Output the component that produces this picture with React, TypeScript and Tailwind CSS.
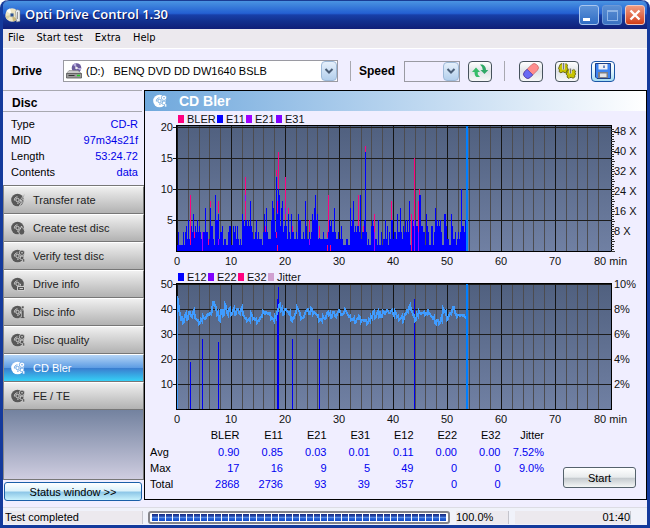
import type { ReactNode } from 'react';

const E11_COLUMNS =
  '1311113134' + '2524436343' + '5343213373' + '3227442195' + '5623341221' +
  '1344114342' + '4212165455' + '4548432235' + '2322213637' + '322258753c' +
  '6a94783454' + '2632643223' + '2655223284' + '2232365795' + '6232223222' +
  '2354533732' + '2322421112' + '2117458343' + '44392335g3' + '1211454322' +
  '1511312252' + '4132552332' + '6337324353' + '5381354554' + '4599443316' +
  '4311441375' + '4545311664' + '2211642231' + '2323a44351';

const PINK = '#ff0080';
const VIOLET = '#a000ff';

// column, from, to, colour
const BLER_MARKS: [number, number, number, string][] = [
  [13, 1, 9, PINK], [17, 2, 3, PINK], [25, 0, 3, VIOLET], [31, 1, 2, PINK], [33, 7, 8, PINK],
  [41, 6, 8, PINK], [41, 1, 2, VIOLET], [68, 5, 12, PINK], [68, 8, 9, VIOLET], [88, 3, 4, PINK],
  [99, 12, 13, PINK], [99, 2, 3, PINK], [100, 6, 8, PINK], [100, 0, 1, PINK], [101, 10, 16, PINK],
  [108, 5, 12, PINK], [108, 6, 7, VIOLET], [111, 6, 7, PINK], [115, 3, 4, PINK], [132, 3, 5, PINK],
  [132, 1, 2, VIOLET], [142, 2, 4, PINK], [150, 0, 1, PINK], [150, 2, 3, PINK], [151, 3, 9, PINK],
  [153, 0, 1, PINK], [181, 4, 9, PINK], [186, 3, 4, PINK], [188, 16, 17, PINK], [197, 3, 6, PINK],
  [197, 0, 3, VIOLET], [214, 5, 8, PINK], [234, 0, 6, PINK], [237, 5, 15, PINK], [237, 0, 5, VIOLET],
  [241, 3, 8, PINK], [241, 0, 3, VIOLET], [242, 9, 10, PINK],
];

const E12_SPIKES: [number, number][] = [
  [13, 19], [25, 28], [41, 27], [100, 44], [101, 49], [115, 28], [142, 28], [237, 44],
];

const JITTER = [
  45, 39, 36, 35, 38, 36, 39, 37, 39, 37, 36, 35, 36, 37, 36, 38, 38, 39, 43, 41, 38, 36, 40, 38,
  42, 38, 40, 38, 40, 38, 40, 38, 40, 38, 37, 36, 36, 38, 36, 36, 35, 36, 37, 39, 38, 39, 39, 37,
  36, 37, 39, 42, 40, 38, 40, 39, 38, 36, 37, 39, 41, 39, 36, 37, 39, 40, 38, 40, 38, 39, 38, 36,
  36, 37, 36, 39, 38, 37, 39, 37, 38, 40, 38, 39, 40, 38, 37, 36, 36, 35, 36, 37, 35, 36, 36, 35,
  36, 37, 39, 37, 39, 38, 37, 39, 38, 40, 39, 40, 38, 39, 37, 36, 37, 36, 38, 39, 41, 40, 38, 36,
  38, 39, 38, 39, 38, 39, 38, 37, 36, 35, 36, 35, 36, 40, 39, 36, 38, 39, 41, 38, 37, 38, 38, 38,
  37, 39,
];

const X0 = 32;
const TOP = 15;
const BOTTOM = 140;

type Tick = { y: number; label: string };

type ChartProps = {
  id: string;
  title: string;
  legend: { label: string; color: string; x: number }[];
  left: Tick[];
  right: Tick[];
  fineTicks?: boolean;
  children: ReactNode;
};

const Chart = ({ id, title, legend, left, right, fineTicks, children }: ChartProps) => (
  <svg viewBox="0 0 501 158" className="block w-full" role="img" aria-label={title}>
    <defs>
      <linearGradient id={id} x1="0" y1="0" x2="0" y2="1">
        <stop offset="0" stopColor="#50607f" />
        <stop offset="1" stopColor="#7080a3" />
      </linearGradient>
    </defs>
    <g className="[font-family:'Liberation_Sans',Arial,sans-serif] text-[11px]" fill="#111">
      {legend.map((item) => (
        <g key={item.label}>
          <rect x={item.x} y="4" width="6" height="8" fill={item.color} />
          <text x={item.x + 9} y="12">{item.label}</text>
        </g>
      ))}
      {left.map((t) => (
        <text key={t.label} x="28" y={t.y + 4} textAnchor="end">{t.label}</text>
      ))}
      {right.map((t) => (
        <text key={t.label} x="469" y={t.y + 4}>{t.label}</text>
      ))}
      {[0, 10, 20, 30, 40, 50, 60, 70].map((m) => (
        <text key={m} x={X0 + m * 5.4} y="154" textAnchor="middle">{m}</text>
      ))}
      <text x="449" y="154">80 min</text>
    </g>
    <g shapeRendering="crispEdges">
      <rect x={X0} y={TOP} width="434" height="125" fill={`url(#${id})`} />
      {Array.from({ length: 40 }, (_, i) => (
        <rect key={i} x={Math.round(X0 + i * 10.8)} y={TOP} width="1" height="125" fill={i % 5 ? '#4c4c50' : '#151515'} />
      ))}
      {left.map((t) => (
        <rect key={t.label} x="28" y={t.y} width="438" height="1" fill="#1c1c1c" />
      ))}
      {children}
      <rect x="321" y={TOP} width="2" height="125" fill="#0080ff" />
      <path d="M31 14h436v127h-436z M32 15v125h434v-125z" fillRule="evenodd" fill="#000" />
      {fineTicks &&
        Array.from({ length: 50 }, (_, i) => (
          <rect key={i} x="466" y={Math.round(BOTTOM - i * 2.5)} width={i % 4 ? 3 : 4} height="1" fill="#333" />
        ))}
    </g>
  </svg>
);

const BlerChart = () => {
  const scale = 6.2;
  return (
    <Chart
      id="blerFill"
      title="BLER, E11, E21 and E31 over time"
      legend={[
        { label: 'BLER', color: PINK, x: 33 },
        { label: 'E11', color: '#0000ff', x: 72 },
        { label: 'E21', color: '#a000ff', x: 101 },
        { label: 'E31', color: '#8000ff', x: 131 },
      ]}
      left={[20, 15, 10, 5].map((v) => ({ y: Math.round(BOTTOM - v * scale), label: String(v) }))}
      right={[48, 40, 32, 24, 16, 8].map((v) => ({ y: BOTTOM - v * 2.5, label: `${v} X` }))}
      fineTicks
    >
      {E11_COLUMNS.split('').map((c, i) => {
        const h = Math.round(parseInt(c, 36) * scale);
        return <rect key={i} x={X0 + i} y={BOTTOM - h} width="1" height={h} fill="#0000ff" />;
      })}
      {BLER_MARKS.map(([x, from, to, color], i) => (
        <rect key={i} x={X0 + x} y={Math.round(BOTTOM - to * scale)} width="1" height={Math.round((to - from) * scale)} fill={color} />
      ))}
    </Chart>
  );
};

const JitterChart = () => {
  const noise = [0, 2, -1, 1, 0, -2, 1, 0, 1, -1, 2, -1];
  const points = JITTER.flatMap((v, i) => {
    const y = Math.round(BOTTOM - v * 2.5);
    return [`${X0 + i * 2},${y + noise[(i * 2) % 12]}`, `${X0 + i * 2 + 1},${y + noise[(i * 5 + 1) % 12]}`];
  });
  return (
    <Chart
      id="jitterFill"
      title="E12, E22, E32 and jitter over time"
      legend={[
        { label: 'E12', color: '#0000ff', x: 33 },
        { label: 'E22', color: '#8000ff', x: 63 },
        { label: 'E32', color: PINK, x: 93 },
        { label: 'Jitter', color: '#d0a0d0', x: 123 },
      ]}
      left={[50, 40, 30, 20, 10].map((v) => ({ y: Math.round(BOTTOM - v * 2.5), label: String(v) }))}
      right={[10, 8, 6, 4, 2].map((v) => ({ y: Math.round(BOTTOM - v * 12.5), label: `${v}%` }))}
    >
      {E12_SPIKES.map(([x, v]) => (
        <rect key={x} x={X0 + x} y={Math.round(BOTTOM - v * 2.5)} width="1" height={Math.round(v * 2.5)} fill="#0000f0" />
      ))}
      <polyline points={points.slice(0, 290).join(' ')} fill="none" stroke="#409cff" strokeWidth="2" />
      <rect x={X0} y="27" width="1" height="113" fill="#409cff" />
    </Chart>
  );
};

type Badge = 'bolt' | 'flame' | 'search' | 'drive' | 'info';

const DiscIcon = ({ badge, color = '#585858', hole = '#d8d8d8' }: { badge: Badge; color?: string; hole?: string }) => (
  <svg viewBox="0 0 14 14" className="h-3.5 w-3.5 shrink-0" aria-hidden="true">
    <circle cx="6.5" cy="7" r="6.3" fill={color} />
    <path d="M3.4 7.5A3.200 3.200 0 0 1 6.500 3.800M9.600 6.800A3.200 3.200 0 0 1 6 10.200" fill="none" stroke={hole} strokeWidth="0.9" />
    <circle cx="6.5" cy="7" r="1.7" fill="none" stroke={hole} strokeWidth="0.9" />
    {badge === 'bolt' && <path d="M13.5 1 9 7.5h2L8.5 13 13.5 6.5h-2L13.8 1z" fill={color} stroke={hole} strokeWidth="0.7" />}
    {badge === 'flame' && <path d="M10.5 5c.3 2 3.3 3 3.3 5.5S12.2 14 10.6 14 7.8 12.5 7.8 10.8 10 8 10.5 5z" fill={color} stroke={hole} strokeWidth="0.8" />}
    {badge === 'search' && (
      <>
        <circle cx="11" cy="3.800" r="2.700" fill={color} stroke={hole} strokeWidth="0.8" />
        <circle cx="11" cy="3.800" r="0.8" fill={hole} />
        <path d="M9.500 7.500h3.200v2.500h1v3h-2V10.500H9.500z" fill={color} stroke={hole} strokeWidth="0.6" />
      </>
    )}
    {badge === 'drive' && <path d="M6.500 9.500h7v4h-7zM8.500 11.500h3.500" fill={color} stroke={hole} strokeWidth="0.9" />}
    {badge === 'info' && <path d="M10.500 1h2.500v2.500h-2.500zM9.500 5h3.500v7h1v1.500H9V12h1.500V6.500h-1z" fill={color} stroke={hole} strokeWidth="0.6" />}
  </svg>
);

const AppIcon = () => (
  <svg viewBox="0 0 16 16" className="h-4 w-4" aria-hidden="true">
    <circle cx="7" cy="8" r="6.700" fill="#efe6c4" />
    <path d="M7 8 1.500 4.200A6.700 6.700 0 0 1 5 1.600z" fill="#fffef6" />
    <path d="M7 8 12 12.500A6.700 6.700 0 0 1 8 14.600z" fill="#c9b77c" />
    <path d="M7 8 2 12.400A6.700 6.700 0 0 1 .4 9z" fill="#d9cfa4" />
    <circle cx="7" cy="8" r="2.200" fill="#7f93a5" />
    <circle cx="7" cy="8" r="1" fill="#123a8c" />
    <path d="M10.500 4.500 12 2.500l3 1v10.800l-3.500.7z" fill="#e9edf0" stroke="#777" strokeWidth="0.5" />
    <path d="M12.500 5v7" stroke="#999" />
  </svg>
);

const DriveIcon = () => (
  <svg viewBox="0 0 16 16" className="h-4 w-4" aria-hidden="true">
    <circle cx="10.500" cy="5" r="4.800" fill="#6a5a9c" />
    <path d="M10.500 5 7 1.700A4.800 4.800 0 0 1 10 .2zM10.500 5l4 2.600a4.800 4.800 0 0 0 .8-2.600z" fill="#b9aee0" />
    <circle cx="10.500" cy="5" r="1.300" fill="#eee" />
    <path d="M3 7.500h9l3.500 3H.5z" fill="#c9c9c9" stroke="#777" strokeWidth="0.5" />
    <path d="M.5 10.500h15v4.500H.5z" fill="#9a9a9a" stroke="#555" strokeWidth="0.8" />
    <path d="M2.500 12.500h6" stroke="#333" />
    <path d="M11 12.500h3" stroke="#20d020" strokeWidth="1.500" />
  </svg>
);

const SwapIcon = () => (
  <svg viewBox="0 0 18 16" className="h-4 w-[18px]" aria-hidden="true">
    <path d="M5 4.500 9 9H6.800v2.500L9 14H5.500Q3.500 13 3.500 9H1z" fill="#36bd68" />
    <path d="M13.500 11 9.500 7h2.300Q12 4 9 1.500h2.500Q15 3 15 7h2.300z" fill="#2fa866" />
  </svg>
);

const EraserIcon = () => (
  <svg viewBox="0 0 18 16" className="h-4 w-[18px]" aria-hidden="true">
    <g transform="rotate(-45 9 8)">
      <rect x="0.500" y="4" width="17" height="8" rx="3.500" fill="#ff8d8d" stroke="#c86464" strokeWidth="0.7" />
      <path d="M7.500 4v8H4A3.500 3.500 0 0 1 .5 8.500V7.500A3.500 3.500 0 0 1 4 4z" fill="#6a6af4" stroke="#3c3cb0" strokeWidth="0.7" />
    </g>
  </svg>
);

const GearsIcon = () => (
  <svg viewBox="0 0 18 16" className="h-4 w-[18px]" aria-hidden="true">
    <g stroke="#55550a" strokeWidth="0.8" fill="#c8c400">
      <path d="M2 1.500 4 .5l1 1h2l1-1L9.500 2 9 4l1 2-1 1.500V9L7 10 6 9H4L3 10 1 8.500 1.500 7 .5 5.500z" />
      <path d="M10 7l2-.8 1 1h2l.8-.8L17.500 8 17 9.500l.7 1.700-1 1 .3 1.600-2 1.500-1.200-.8H12L11 15.500l-2-1.400.4-1.400L8 11l1.100-1.300L9 8z" />
    </g>
    <path d="M5.500 0v6.500" stroke="#eee" strokeWidth="3" />
    <path d="M5.500 0v6.500" stroke="#777" strokeWidth="1.500" />
    <path d="M12.500 5.500v5" stroke="#eee" strokeWidth="2.600" />
    <path d="M12.500 5.500v5" stroke="#777" strokeWidth="1.300" />
  </svg>
);

const SaveIcon = () => (
  <svg viewBox="0 0 16 16" className="h-4 w-4" aria-hidden="true">
    <path d="M.5.5h15v15H2L.5 14z" fill="#3d83f0" stroke="#1d3f86" />
    <path d="M3.500 1h9v5.500h-9z" fill="#eef0f6" />
    <path d="M9 2.500v2.500" stroke="#3d66b0" strokeWidth="1.500" />
    <path d="M3 9h10v6H3z" fill="#7e8086" />
    <path d="M5 10.500h6.500V14H5z" fill="#e4e4e8" />
  </svg>
);

const Chevron = () => (
  <span className="pointer-events-none absolute inset-y-0 right-0 flex w-4 items-center justify-center rounded-sm border border-[#9db9d8] bg-gradient-to-b from-[#e6f0fb] to-[#b3cfec]">
    <svg viewBox="0 0 10 8" className="h-2 w-2.5" aria-hidden="true">
      <path d="M1.500 2 5 5.500 8.500 2" fill="none" stroke="#4a5d76" strokeWidth="2" />
    </svg>
  </span>
);

const ToolButton = ({ label, active, children }: { label: string; active?: boolean; children: ReactNode }) => (
  <button
    type="button"
    aria-label={label}
    className={`flex h-[21px] w-6 items-center justify-center rounded-sm border bg-gradient-to-b from-white ${
      active ? 'border-[#1a55a5] via-[#e2f4fb] to-[#a4dcf2]' : 'border-[#46525c] via-[#dfe3e6] to-[#f6f8f8]'
    }`}
  >
    {children}
  </button>
);

const TEST_PAGES: { label: string; badge: Badge }[] = [
  { label: 'Transfer rate', badge: 'bolt' },
  { label: 'Create test disc', badge: 'flame' },
  { label: 'Verify test disc', badge: 'search' },
  { label: 'Drive info', badge: 'drive' },
  { label: 'Disc info', badge: 'info' },
  { label: 'Disc quality', badge: 'search' },
  { label: 'CD Bler', badge: 'search' },
  { label: 'FE / TE', badge: 'search' },
];

const DISC_FACTS = [
  ['Type', 'CD-R'],
  ['MID', '97m34s21f'],
  ['Length', '53:24.72'],
  ['Contents', 'data'],
];

const COLUMNS = ['BLER', 'E11', 'E21', 'E31', 'E12', 'E22', 'E32', 'Jitter'];
const RESULTS: [string, string[]][] = [
  ['Avg', ['0.90', '0.85', '0.03', '0.01', '0.11', '0.00', '0.00', '7.52%']],
  ['Max', ['17', '16', '9', '5', '49', '0', '0', '9.0%']],
  ['Total', ['2868', '2736', '93', '39', '357', '0', '0', '']],
];

const TitleBar = () => (
  <header className="flex h-[29px] items-center rounded-t-md border-t border-[#1a3c94] bg-[linear-gradient(#4a94e2_0%,#2b6ad4_35%,#2460d2_44%,#183fa8_50%,#12308e_72%,#101f78_100%)] pr-0.5 pl-0.5">
    <AppIcon />
    <h1 className="ml-1 flex-1 [font-family:'Open_Sans','Noto_Sans',sans-serif] text-[13px] font-semibold text-white [text-shadow:1px_1px_0_#0a1a60]">
      Opti Drive Control 1.30
    </h1>
    <div className="flex gap-[3px]">
      <button type="button" aria-label="Minimize" className="flex h-5 w-5 items-end rounded-[3px] border border-[#a9c6ee] bg-gradient-to-b from-[#5e93d8] to-[#2f6cc4] p-[3px]">
        <span className="h-[3px] w-[7px] bg-white" />
      </button>
      <button type="button" aria-label="Maximize" disabled className="flex h-5 w-5 items-center justify-center rounded-[3px] border border-[#6d98d6] bg-gradient-to-b from-[#5b8fd4] to-[#3a72c2]">
        <span className="h-[11px] w-[11px] border border-t-2 border-[#8fb5e6]" />
      </button>
      <button type="button" aria-label="Close" className="flex h-5 w-5 items-center justify-center rounded-[3px] border border-[#f0c8c0] bg-gradient-to-b from-[#ee9a80] to-[#d23c10]">
        <svg viewBox="0 0 12 12" className="h-3 w-3" aria-hidden="true">
          <path d="M1.500 1.500l9 9M10.500 1.500l-9 9" stroke="#fff" strokeWidth="2.400" />
        </svg>
      </button>
    </div>
  </header>
);

const Toolbar = () => (
  <div className="flex h-[42px] items-center border-t border-white pt-[3px] pl-[9px]">
    <label htmlFor="drive" className="w-[51px] text-xs font-bold">Drive</label>
    <div className="relative flex h-[22px] w-[275px] items-center border border-[#9a9aa2] bg-white pl-0.5">
      <DriveIcon />
      <select id="drive" className="min-w-0 flex-1 appearance-none bg-transparent pl-1 whitespace-pre outline-none">
        <option>{'(D:)\u00a0\u00a0 BENQ DVD DD DW1640 BSLB'}</option>
      </select>
      <Chevron />
    </div>
    <span className="ml-3 h-5 w-px bg-[#a8a8b0]" />
    <label htmlFor="speed" className="ml-2 w-[45px] text-xs font-bold">Speed</label>
    <div className="relative flex h-[21px] w-14 border border-[#9a9aa2]">
      <select id="speed" className="w-full appearance-none bg-transparent outline-none" />
      <Chevron />
    </div>
    <div className="ml-2 flex items-center gap-3">
      <ToolButton label="Refresh"><SwapIcon /></ToolButton>
      <span className="mr-0.5 h-5 w-px bg-[#a8a8b0]" />
      <ToolButton label="Erase"><EraserIcon /></ToolButton>
      <ToolButton label="Settings"><GearsIcon /></ToolButton>
      <ToolButton label="Save" active><SaveIcon /></ToolButton>
    </div>
  </div>
);

const Sidebar = () => (
  <aside className="flex w-[141px] shrink-0 flex-col">
    <h2 className="mr-0.5 h-[22px] border-y border-[#a8a8b0] pt-[3px] pl-[9px] text-xs leading-[18px] font-bold">Disc</h2>
    <dl className="grid h-[73px] grid-cols-[auto_1fr] content-start pt-1 pr-1.5 pl-2 leading-4">
      {DISC_FACTS.map(([name, value]) => (
        <div key={name} className="contents">
          <dt>{name}</dt>
          <dd className="text-right text-[#0000e8]">{value}</dd>
        </div>
      ))}
    </dl>
    <nav className="flex flex-1 flex-col border-y border-l border-y-[#777] border-l-[#888]">
      {TEST_PAGES.map(({ label, badge }) => {
        const active = label === 'CD Bler';
        return (
          <button
            key={label}
            type="button"
            aria-current={active ? 'page' : undefined}
            className={`flex h-7 items-center gap-2 border-t border-r border-b border-t-white border-r-[#777] border-b-[#777] pl-[7px] text-left ${
              active
                ? 'bg-[linear-gradient(#b4d4f6_0%,#5f9ee4_48%,#3a7fd0_52%,#35d0f6_100%)] text-white'
                : 'bg-gradient-to-b from-[#f0f0f0] to-[#b2b2b2] text-[#222]'
            }`}
          >
            <DiscIcon badge={badge} color={active ? '#ffffff' : undefined} hole={active ? '#5f9ee4' : undefined} />
            {label}
          </button>
        );
      })}
      <div className="flex-1 border-r border-[#777] bg-gradient-to-b from-[#73829f] to-[#cfcde0]" />
    </nav>
    <button
      type="button"
      className="mt-0.5 mr-0.5 ml-px h-[19px] rounded-[3px] border border-[#1a5fa8] bg-[linear-gradient(#ffffff_0%,#dcf2fb_45%,#8fc8e8_55%,#c8f2fc_100%)] leading-4"
    >
      Status window &gt;&gt;
    </button>
  </aside>
);

const ResultTable = () => (
  <table className="w-[394px] table-fixed leading-4">
    <thead>
      <tr>
        <td className="w-[46px]" />
        {COLUMNS.map((c) => (
          <th key={c} scope="col" className="p-0 pb-px text-right font-normal">{c}</th>
        ))}
      </tr>
    </thead>
    <tbody className="text-[#0000f0]">
      {RESULTS.map(([name, values]) => (
        <tr key={name}>
          <th scope="row" className="p-0 text-left font-normal text-black">{name}</th>
          {values.map((v, i) => (
            <td key={i} className="p-0 text-right">{v}</td>
          ))}
        </tr>
      ))}
    </tbody>
  </table>
);

const StatusBar = () => (
  <footer className="flex h-[18px] items-center border-t border-[#dcdce4] bg-[#f0f2fa] pt-0.5 pl-0.5">
    <span className="w-[138px] border-r border-[#c4c4cc] bg-[#ece9ee] leading-[13px]">Test completed</span>
    <div
      role="progressbar"
      aria-label="Test progress"
      aria-valuenow={100}
      className="ml-[5px] flex h-[13px] flex-1 gap-px overflow-hidden rounded-[3px] border-2 border-[#85858b] bg-white px-0.5 py-px"
    >
      {Array.from({ length: 42 }, (_, i) => (
        <span key={i} className="flex-1 bg-[linear-gradient(#14247c_0%,#2a52b4_35%,#8fb4ee_45%,#2e6ada_55%,#0f48c8_100%)]" />
      ))}
    </div>
    <span className="ml-1.5 w-[53px] border-r border-[#c4c4cc] bg-[#ece9ee] leading-[13px]">100.0%</span>
    <span className="mr-4 ml-1.5 w-[116px] border-r border-[#c4c4cc] bg-[#ece9ee] text-right leading-[13px]">01:40</span>
  </footer>
);

const App = () => (
  <div className="flex min-h-screen flex-col bg-white [font-family:'Liberation_Sans',Arial,sans-serif] text-[11px] text-black">
    <div className="flex flex-1 flex-col rounded-t-lg border-x-[3px] border-b-[3px] border-[#143a9c] bg-[#f0eeff]">
      <TitleBar />
      <nav className="flex h-[19px] items-center gap-3 bg-[#ece9ee] pl-[5px] [font-family:'DejaVu_Sans_Condensed','DejaVu_Sans',sans-serif]">
        <button type="button">File</button>
        <button type="button">Start test</button>
        <button type="button">Extra</button>
        <button type="button">Help</button>
      </nav>
      <Toolbar />
      <main className="flex flex-1 pb-1.5">
        <Sidebar />
        <section className="mb-px flex min-w-0 flex-1 flex-col border border-black">
          <h2 className="flex h-5 items-center gap-3 bg-gradient-to-r from-[#6fa8dc] to-white pl-2 text-sm font-bold text-white">
            <DiscIcon badge="search" color="#ffffff" hole="#6fa8dc" />
            CD Bler
          </h2>
          <BlerChart />
          <JitterChart />
          <div className="flex items-end justify-between pr-2.5 pl-[5px]">
            <ResultTable />
            <button
              type="button"
              className="mb-1 h-[21px] w-[73px] rounded-[3px] border border-[#55626c] bg-[linear-gradient(#ffffff_0%,#e8ebed_48%,#c6cbcf_55%,#f4f6f6_100%)] leading-4"
            >
              Start
            </button>
          </div>
        </section>
      </main>
      <StatusBar />
    </div>
  </div>
);

export default App;
